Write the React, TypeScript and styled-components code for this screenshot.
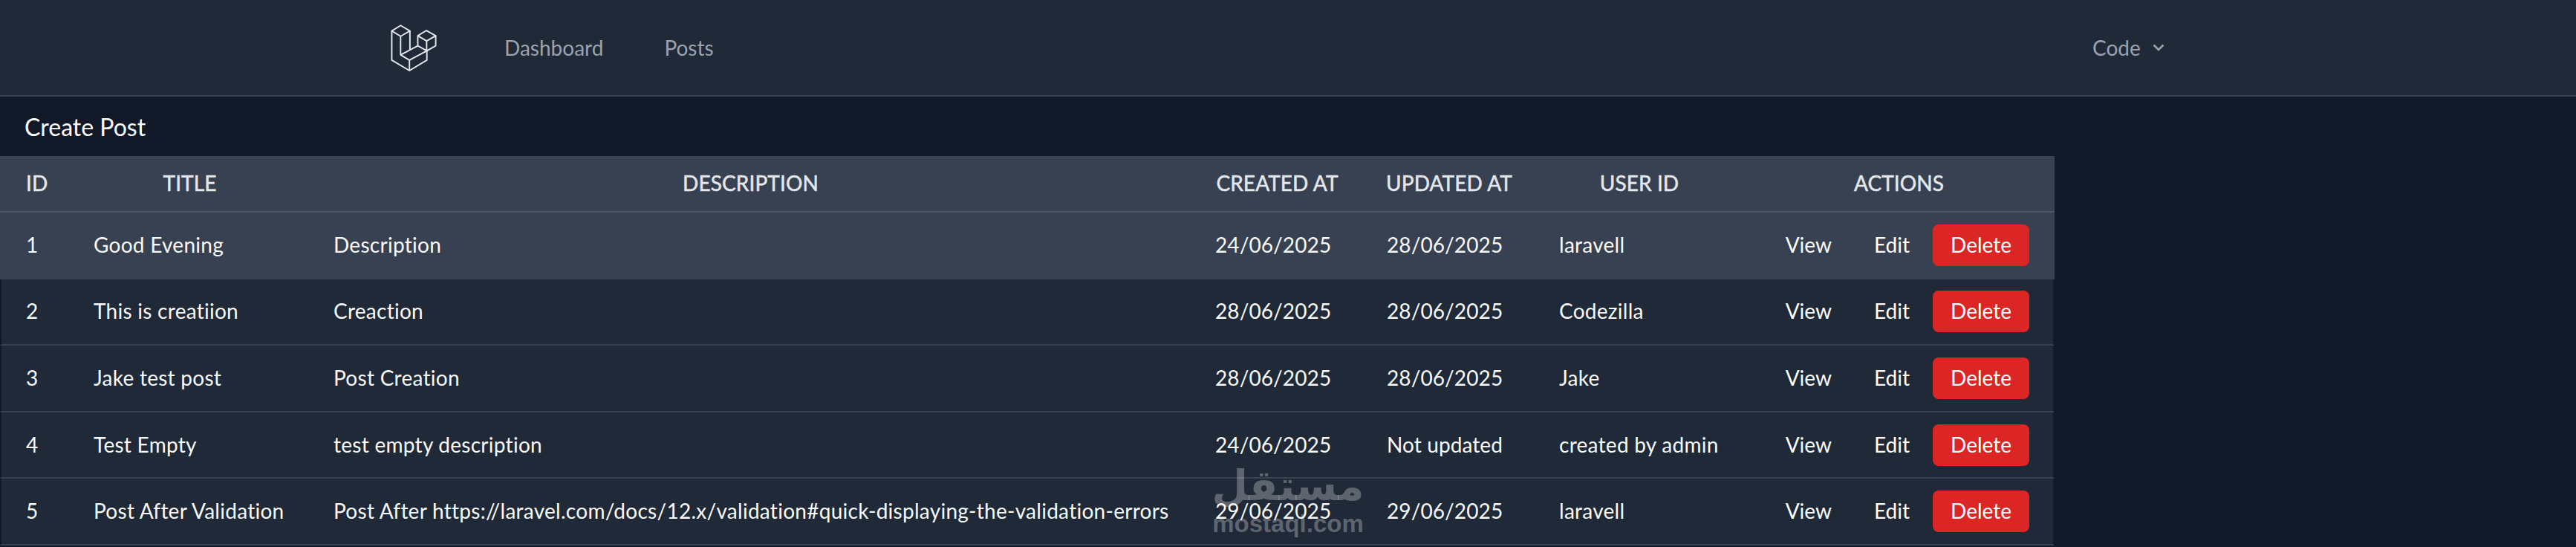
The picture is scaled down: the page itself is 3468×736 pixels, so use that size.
import React from "react";
import styled, { createGlobalStyle } from "styled-components";

const Global = createGlobalStyle`
  html, body { margin: 0; padding: 0; background: #111827; overflow: hidden; }
  body {
    font-family: "Lato", "Liberation Sans", sans-serif;
    font-size: 28px;
    color: #fff;
    font-variant-ligatures: none;
  }
  #root { position: relative; height: 736px; overflow: hidden; }
`;

const Nav = styled.nav`
  display: flex;
  align-items: center;
  justify-content: space-between;
  height: 128px;
  box-sizing: content-box;
  padding: 0 50px 0 526px;
  background: #1f2937;
  border-bottom: 2px solid #374151;
`;
const NavLeft = styled.div`
  display: flex;
  align-items: center;
`;
const Logo = styled.svg`
  width: 62px;
  height: 63px;
  margin-right: 91px;
  fill: none;
  stroke: #e5e7eb;
  stroke-width: 6;
  stroke-linejoin: round;
`;
const NavLink = styled.a`
  color: #9ca3af;
  font-size: 28px;
  margin-right: 82px;
`;
const Dropdown = styled.div`
  display: flex;
  align-items: center;
  gap: 16px;
  width: 601px;
  color: #9ca3af;
  font-size: 28px;
`;
const Heading = styled.div`
  display: flex;
  align-items: center;
  height: 80px;
  padding-left: 33px;
  font-size: 32px;
  color: #fff;
`;
const Table = styled.table`
  width: 2766px;
  table-layout: fixed;
  border-collapse: separate;
  border-spacing: 0;
`;
const Th = styled.th<{ $align?: string }>`
  height: 76px;
  padding: 0 0 2px ${(p) => (p.$align === "left" ? "35px" : "0")};
  box-sizing: border-box;
  background: #374151;
  border-bottom: 2px solid #4b5563;
  color: #e5e7eb;
  font-size: 28px;
  font-weight: 400;
  letter-spacing: 0.1px;
  -webkit-text-stroke: 0.5px #e5e7eb;
  text-align: ${(p) => p.$align || "center"};
  white-space: nowrap;
`;
const Row = styled.tr<{ $active?: boolean }>`
  height: 89.6px;
  td {
    background: ${(p) => (p.$active ? "#374151" : "#1f2937")};
  }
  td:first-child {
    border-left: 2px solid ${(p) => (p.$active ? "#374151" : "#111827")};
  }
  td:last-child {
    border-right: 2px solid ${(p) => (p.$active ? "#374151" : "#111827")};
  }
`;
const Td = styled.td<{ $pad?: number; $tight?: boolean }>`
  box-sizing: border-box;
  padding: 0 0 2px ${(p) => p.$pad ?? 32}px;
  border-bottom: 2px solid #374151;
  color: #f9fafb;
  font-size: 28px;
  letter-spacing: ${(p) => (p.$tight ? "0.1px" : "0.27px")};
  white-space: nowrap;
`;
const ActionCell = styled(Td)`
  padding: 0;
  letter-spacing: 0;
`;
const Actions = styled.div`
  display: flex;
  align-items: center;
  justify-content: flex-end;
  gap: 5px;
  padding-right: 32px;
`;
const LinkButton = styled.a`
  padding: 0 26px;
  line-height: 54px;
  height: 56px;
  color: #fff;
`;
const DeleteButton = styled.button`
  height: 56px;
  width: 130px;
  padding: 0 0 2px;
  border: 0;
  border-radius: 8px;
  background: #dc2626;
  color: #fff;
  font: inherit;
`;
const Watermark = styled.div`
  position: absolute;
  left: 1638px;
  top: 618px;
  width: 192px;
  display: flex;
  flex-direction: column;
  align-items: center;
  color: rgba(255, 255, 255, 0.28);
  pointer-events: none;
`;
const WatermarkArabic = styled.span`
  font-family: "DejaVu Sans", sans-serif;
  font-weight: 700;
  font-size: 56px;
  line-height: 72px;
`;
const WatermarkLatin = styled.span`
  font-family: "Liberation Sans", sans-serif;
  font-weight: 700;
  font-size: 33px;
  line-height: 30px;
`;

const posts = [
  ["1", "Good Evening", "Description", "24/06/2025", "28/06/2025", "laravell"],
  ["2", "This is creatiion", "Creaction", "28/06/2025", "28/06/2025", "Codezilla"],
  ["3", "Jake test post", "Post Creation", "28/06/2025", "28/06/2025", "Jake"],
  ["4", "Test Empty", "test empty description", "24/06/2025", "Not updated", "created by admin"],
  ["5", "Post After Validation", "Post After https://laravel.com/docs/12.x/validation#quick-displaying-the-validation-errors", "29/06/2025", "29/06/2025", "laravell"],
];
const widths = [94, 323, 1187, 231, 232, 280, 419];

export default function App() {
  return (
    <>
      <Global />
      <Nav>
        <NavLeft>
          <Logo viewBox="75 33 192 196">
            <path d="M79 60 116 37 155 60 116 82Z" />
            <path d="M188 80 224 58 263 80 225 102Z" />
            <path d="M79 60V182L153 226 226 182V143" />
            <path d="M263 80V122L226 143 188 122V80M225 102V143" />
            <path d="M116 82V160L153 182 226 143M116 160 188 122M155 60V138M153 182V226" />
          </Logo>
          <NavLink>Dashboard</NavLink>
          <NavLink>Posts</NavLink>
        </NavLeft>
        <Dropdown>
          Code
          <svg width="16" height="10" viewBox="0 0 16 10" fill="none" stroke="#9ca3af" strokeWidth="2.6">
            <path d="M1.5 1.5 8 8l6.5-6.5" />
          </svg>
        </Dropdown>
      </Nav>
      <Heading>Create Post</Heading>
      <Table>
        <colgroup>
          {widths.map((w, i) => (
            <col key={i} width={w} />
          ))}
        </colgroup>
        <thead>
          <tr>
            <Th $align="left">ID</Th>
            <Th>TITLE</Th>
            <Th>DESCRIPTION</Th>
            <Th>CREATED AT</Th>
            <Th>UPDATED AT</Th>
            <Th>USER ID</Th>
            <Th>ACTIONS</Th>
          </tr>
        </thead>
        <tbody>
          {posts.map((p, i) => (
            <Row key={p[0]} $active={i === 0}>
              <Td $pad={33}>{p[0]}</Td>
              {p.slice(1).map((c, j) => (
                <Td key={j} $tight={j === 2 || j === 3}>
                  {c}
                </Td>
              ))}
              <ActionCell>
                <Actions>
                  <LinkButton>View</LinkButton>
                  <LinkButton>Edit</LinkButton>
                  <DeleteButton>Delete</DeleteButton>
                </Actions>
              </ActionCell>
            </Row>
          ))}
        </tbody>
      </Table>
      <Watermark>
        <WatermarkArabic>مستقل</WatermarkArabic>
        <WatermarkLatin>mostaql.com</WatermarkLatin>
      </Watermark>
    </>
  );
}
